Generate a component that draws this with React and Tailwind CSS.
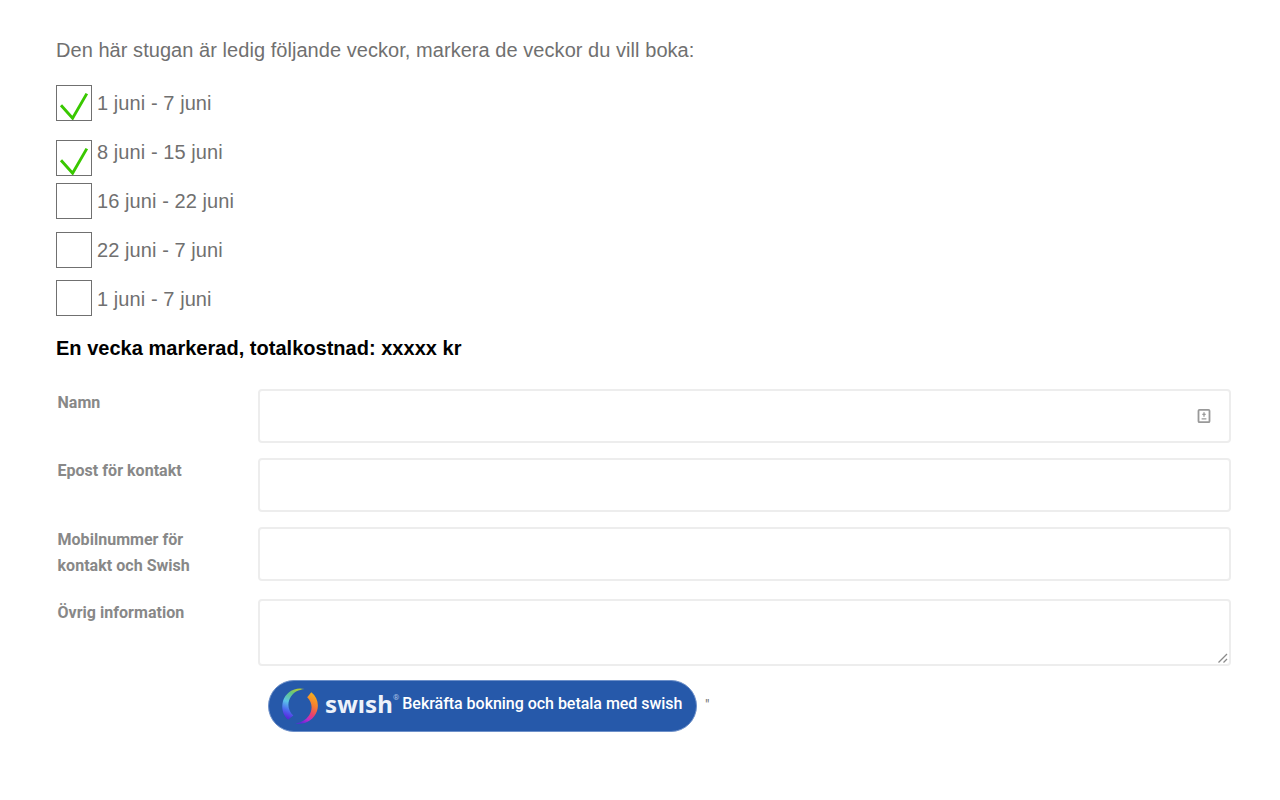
const weeks = [
  { label: "1 juni - 7 juni", checked: true, offset: "mt-0" },
  { label: "8 juni - 15 juni", checked: true, offset: "mt-[6px]" },
  { label: "16 juni - 22 juni", checked: false, offset: "mt-0" },
  { label: "22 juni - 7 juni", checked: false, offset: "mt-0" },
  { label: "1 juni - 7 juni", checked: false, offset: "-mt-px" },
];

function Week({ label, checked, offset }) {
  return (
    <label className="flex h-[49px] items-start gap-[5px]">
      <span className={`${offset} size-9 shrink-0 border border-[#707070]`}>
        {checked && (
          <svg viewBox="0 0 34 34" className="size-[34px]" fill="none" stroke="#39c800" strokeWidth="2.9">
            <path d="M4 19.2 L15.6 32.2 L29.8 7.6" />
          </svg>
        )}
      </span>
      <span className="leading-9 tracking-[0.08px] whitespace-nowrap">{label}</span>
    </label>
  );
}

function Field({ label, className, labelOffset = "pt-[1.5px]", children }) {
  return (
    <div className={`flex ${className}`}>
      <span className={`w-[202px] shrink-0 pl-[1.5px] font-[Roboto,sans-serif] text-[16px] leading-[26px] font-bold tracking-[0.03px] text-[#888] ${labelOffset}`}>
        {label}
      </span>
      {children}
    </div>
  );
}

function TextBox({ className = "mt-px h-[54px]", children }) {
  return (
    <div className={`flex w-[973px] justify-end rounded-[4px] border-2 border-[#ededed] bg-white ${className}`}>
      {children}
    </div>
  );
}

function SwishMark() {
  return (
    <svg viewBox="0 0 36 36" className="size-9">
      <defs>
        <linearGradient id="left" x1="0.65" y1="0" x2="0.35" y2="1">
          <stop offset="0" stopColor="#b4c936" />
          <stop offset="0.2" stopColor="#63c77e" />
          <stop offset="0.5" stopColor="#5cc4e8" />
          <stop offset="0.75" stopColor="#4d6df0" />
          <stop offset="1" stopColor="#5a22dd" />
        </linearGradient>
        <linearGradient id="right" x1="0.75" y1="0" x2="0.3" y2="1">
          <stop offset="0" stopColor="#f6b21c" />
          <stop offset="0.35" stopColor="#f47b32" />
          <stop offset="0.6" stopColor="#e83f70" />
          <stop offset="0.8" stopColor="#b82bd0" />
          <stop offset="1" stopColor="#5b2ad6" />
        </linearGradient>
      </defs>
      <path d="M22.5 1 C13 -1.5 3.5 4.5 1 13 C-1 20.5 1.2 27.5 6.2 31.6 L11.3 27.4 C5.8 22.5 4.8 14.5 9 8.5 C12 4 16.5 1.8 22.5 1 Z" fill="url(#left)" />
      <path d="M13.5 35.4 C22.5 37.3 32 32 35 23 C37.2 16 35.2 9 29.3 4.3 L25.2 9.3 C30.3 14.3 31 21.5 27 27.5 C24 32 19.5 34.6 13.5 35.4 Z" fill="url(#right)" />
    </svg>
  );
}

export default function App() {
  return (
    <main className="h-[800px] w-[1280px] overflow-hidden bg-white pt-9 pl-14 font-['Liberation_Sans',sans-serif] text-[20px] text-[#707070]">
      <p className="h-[49px] leading-7 tracking-[0.05px]">Den här stugan är ledig följande veckor, markera de veckor du vill boka:</p>
      {weeks.map((week, i) => (
        <Week key={i} {...week} />
      ))}
      <p className="h-[58px] leading-9 font-bold tracking-[0.02px] text-black">En vecka markerad, totalkostnad: xxxxx kr</p>
      <Field label="Namn" className="h-[69px]">
        <TextBox>
          <svg viewBox="0 0 14 16" className="mt-[17px] mr-[18.5px] h-4 w-3.5" fill="none" stroke="#999">
            <rect x="1.5" y="1.8" width="11" height="12.4" rx="1" strokeWidth="1.8" />
            <path d="M7 4.3v4.4M5.3 6.3h3.4M4.6 10.8h4.8" strokeWidth="1.3" />
          </svg>
        </TextBox>
      </Field>
      <Field label="Epost för kontakt" className="h-[69px]" labelOffset="pt-px">
        <TextBox />
      </Field>
      <Field label={<>Mobilnummer för<br />kontakt och Swish</>} className="h-[73px]" labelOffset="pt-px">
        <TextBox />
      </Field>
      <Field label="Övrig information" className="h-[81px]" labelOffset="pt-px">
        <TextBox className="h-[67px] items-end">
          <svg viewBox="0 0 10 10" className="mr-[1.5px] mb-[1.5px] size-2.5" stroke="#8a8a8a" strokeWidth="1.3">
            <path d="M0.5 9.5 L9 1 M5.5 9.5 L9 6" />
          </svg>
        </TextBox>
      </Field>
      <div className="ml-[212px] flex h-[52px] font-[Roboto,sans-serif]">
        <button className="flex h-[52px] w-[429px] rounded-full border border-[#6d90c9] bg-[#2659aa] pl-[12.5px] text-left text-white">
          <span className="mt-[6.5px]">
            <SwishMark />
          </span>
          <span className="ml-[7.5px] w-[68px] font-['Noto_Sans',sans-serif] text-[24px] leading-[45px] font-bold tracking-[0.1px] text-[#edf2fa]">swısh</span>
          <span className="mt-[12px] text-[8px] leading-[10px] text-[#a9c0e4]">®</span>
          <span className="ml-[3px] text-[16px] leading-[45px] font-medium tracking-[-0.03px] whitespace-nowrap">Bekräfta bokning och betala med swish</span>
        </button>
        <span className="ml-2 text-[14px] leading-[51px]">"</span>
      </div>
    </main>
  );
}
